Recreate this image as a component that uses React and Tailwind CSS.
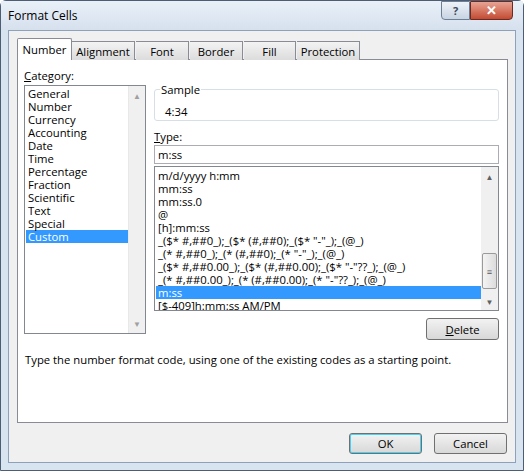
export default function App() {
  const cats = ["General","Number","Currency","Accounting","Date","Time","Percentage","Fraction","Scientific","Text","Special","Custom"];
  const types = ["m/d/yyyy h:mm","mm:ss","mm:ss.0","@","[h]:mm:ss",
    '_($* #,##0_);_($* (#,##0);_($* "-"_);_(@_)',
    '_(* #,##0_);_(* (#,##0);_(* "-"_);_(@_)',
    '_($* #,##0.00_);_($* (#,##0.00);_($* "-"??_);_(@_)',
    '_(* #,##0.00_);_(* (#,##0.00);_(* "-"??_);_(@_)',
    "m:ss","[$-409]h:mm:ss AM/PM"];
  const tabs = ["Alignment","Font","Border","Fill","Protection"];
  const tabW = [63,53,53,52,63];
  const btn = "flex items-center justify-center rounded-[3px] border border-[#707070] bg-gradient-to-b from-[#f2f2f2] to-[#d8d8d8]";
  return (
    <div className="w-[524px] h-[471px] bg-[#d9e4f1] border border-[#4c5d74] rounded-t-[6px] flex flex-col text-[11.3px] leading-[13px] text-black" style={{fontFamily:'"Open Sans","Noto Sans",sans-serif'}}>
      <div className="h-[29px] flex items-start justify-between pl-[7px] bg-gradient-to-b from-[#e9f0f8] to-[#d6e1ee]">
        <div className="mt-[8px] text-[12px]">Format Cells</div>
        <div className="flex mr-[10px]">
          <div className="w-[29px] h-[19px] border border-[#6d7f95] rounded-bl-[4px] bg-gradient-to-b from-[#eef3f9] to-[#c8d4e2] flex items-center justify-center text-[11px] text-[#3a4a5e] font-bold">?</div>
          <div className="w-[43px] h-[19px] border border-[#6d2a20] rounded-br-[4px] bg-gradient-to-b from-[#e8a393] to-[#c24a31] flex items-center justify-center text-white text-[13px] font-bold">✕</div>
        </div>
      </div>
      <div className="flex-1 mx-[7px] mb-[7px] bg-[#f0f0f0] border border-[#8da2ba] flex flex-col pt-[7px] px-[8px]">
        <div className="flex items-end h-[22px] relative z-10">
          <div className="w-[55px] h-[22px] bg-white border border-[#898c95] border-b-0 rounded-t-[2px] flex items-center justify-center">Number</div>
          {tabs.map((t,i)=>(
            <div key={t} style={{width:tabW[i]}} className="h-[19px] mr-[1px] bg-gradient-to-b from-[#f3f3f3] to-[#dcdcdc] border border-[#898c95] border-b-0 border-l-0 flex items-center justify-center">{t}</div>
          ))}
        </div>
        <div className="h-[364px] w-[491px] bg-white border border-[#898c95] -mt-[1px] flex flex-col px-[6px]">
          <div className="flex mt-[9px] gap-[8px]">
            <div className="flex flex-col">
              <div className="h-[16px]"><span className="underline">C</span>ategory:</div>
              <div className="w-[122px] h-[249px] border border-[#828790] flex">
                <div className="flex-1 pt-[1px] pl-[1px]">
                  {cats.map(c=>(
                    <div key={c} className={"h-[13px] leading-[13px] pl-[2px] " + (c==="Custom"?"bg-[#3399ff] text-white":"")}>{c}</div>
                  ))}
                </div>
                <div className="w-[17px] bg-[#f0f0f0] border-l border-[#e8e8e8] flex flex-col items-center">
                  <div className="text-[8px] text-[#a0a0a0] mt-[3px]">▲</div>
                  <div className="flex-1"/>
                  <div className="text-[8px] text-[#a0a0a0] mb-[3px]">▼</div>
                </div>
              </div>
            </div>
            <div className="flex flex-col mt-[20px] w-[345px]">
              <div className="h-[32px] border border-[#d5dfe5] rounded-[3px] relative pl-[10px] pt-[15px]">
                <div className="absolute -top-[7px] left-[5px] bg-white px-[1px]">Sample</div>
                4:34
              </div>
              <div className="mt-[9px] h-[15px]"><span className="underline">T</span>ype:</div>
              <div className="h-[19px] border border-[#abadb3] pl-[3px] leading-[17px]">m:ss</div>
              <div className="mt-[2px] h-[145px] border border-[#828790] flex">
                <div className="flex-1 pt-[2px] pl-[1px] overflow-hidden">
                  {types.map(c=>(
                    <div key={c} className={"h-[13px] leading-[13px] pl-[2px] whitespace-nowrap " + (c==="m:ss"?"bg-[#3399ff] text-white":"")}>{c}</div>
                  ))}
                </div>
                <div className="w-[17px] bg-[#f0f0f0] flex flex-col items-center">
                  <div className="text-[8px] text-[#606060] mt-[3px]">▲</div>
                  <div className="flex-1"/>
                  <div className="w-[15px] h-[36px] border border-[#9a9a9a] rounded-[2px] bg-gradient-to-r from-[#f4f4f4] to-[#dcdcdc] flex items-center justify-center text-[9px] text-[#555] mb-[6px]">≡</div>
                  <div className="text-[8px] text-[#606060] mb-[2px]">▼</div>
                </div>
              </div>
              <div className="flex justify-end mt-[7px]">
                <div className={btn + " w-[73px] h-[22px]"}><span className="underline">D</span>elete</div>
              </div>
            </div>
          </div>
          <div className="mt-[13px] pl-[1px]">Type the number format code, using one of the existing codes as a starting point.</div>
        </div>
        <div className="flex justify-end gap-[12px] mt-[10px]">
          <div className={btn + " w-[73px] h-[21px] border-[#3c7fb1] shadow-[inset_0_0_0_1px_#48d0f5]"}>OK</div>
          <div className={btn + " w-[73px] h-[21px]"}>Cancel</div>
        </div>
      </div>
    </div>
  );
}
